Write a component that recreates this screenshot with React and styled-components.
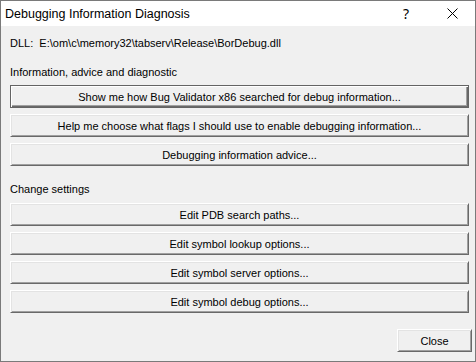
import React from 'react';
import styled, { createGlobalStyle } from 'styled-components';

const Global = createGlobalStyle`
    html, body {
        margin: 0;
        padding: 0;
        background: #f0f0f0;
    }
`;

const Window = styled.div`
    width: 476px;
    height: 362px;
    box-sizing: border-box;
    border: 1px solid #7a7a7a;
    background: #f0f0f0;
    display: flex;
    flex-direction: column;
    font-family: "Liberation Sans", Arial, sans-serif;
    font-size: 11px;
    color: #000;
`;

const TitleBar = styled.div`
    height: 25px;
    background: #fff;
    display: flex;
    align-items: center;
    padding-left: 4px;
`;

const Title = styled.span`
    flex: 1;
    font-family: "Liberation Sans", Arial, sans-serif;
    font-size: 12.5px;
    padding-top: 1px;
`;

const TitleButton = styled.span`
    width: ${p => p.$w}px;
    height: 25px;
    display: flex;
    align-items: center;
    justify-content: center;
    font-family: "Noto Sans", sans-serif;
    font-size: 14px;
`;

const Body = styled.div`
    flex: 1;
    display: flex;
    flex-direction: column;
    padding: 11px 6px 0 9px;
`;

const Label = styled.div`
    height: 13px;
    line-height: 13px;
    margin-bottom: ${p => p.$after || 6}px;
    margin-top: ${p => p.$before || 0}px;
    white-space: pre;
`;

const Stack = styled.div`
    display: flex;
    flex-direction: column;
    gap: 6px;
`;

const Button = styled.button`
    height: 23px;
    box-sizing: border-box;
    margin: 0;
    padding: 0;
    background: #f0f0f0;
    font-family: "Liberation Sans", Arial, sans-serif;
    font-size: 11px;
    color: #000;
    text-align: center;
    border: 1px solid;
    border-color: ${p => p.$default ? '#646464' : '#fff #696969 #696969 #fff'};
    box-shadow: ${p => p.$default
        ? 'inset 1px 1px #fff, inset -1px -1px #696969, inset -2px -2px #a0a0a0'
        : 'inset 1px 1px #e3e3e3, inset -1px -1px #a0a0a0'};
`;

const Footer = styled.div`
    display: flex;
    justify-content: flex-end;
    margin-top: 16px;
    margin-right: -3px;
`;

const CloseButton = styled(Button)`
    width: 75px;
`;

function XIcon() {
    return (
        <svg width="11" height="11" viewBox="0 0 11 11">
            <path d="M0.5 0.5 L10.5 10.5 M10.5 0.5 L0.5 10.5" stroke="#000" strokeWidth="1" />
        </svg>
    );
}

export default function App() {
    return (
        <>
            <Global />
            <Window>
                <TitleBar>
                    <Title>Debugging Information Diagnosis</Title>
                    <TitleButton $w={26}>?</TitleButton>
                    <TitleButton $w={19} />
                    <TitleButton $w={28}><XIcon /></TitleButton>
                    <TitleButton $w={9} />
                </TitleBar>
                <Body>
                    <Label $after={16}>DLL:  E:\om\c\memory32\tabserv\Release\BorDebug.dll</Label>
                    <Label>Information, advice and diagnostic</Label>
                    <Stack>
                        <Button $default>Show me how Bug Validator x86 searched for debug information...</Button>
                        <Button>Help me choose what flags I should use to enable debugging information...</Button>
                        <Button>Debugging information advice...</Button>
                    </Stack>
                    <Label $before={17} $after={7}>Change settings</Label>
                    <Stack>
                        <Button>Edit PDB search paths...</Button>
                        <Button>Edit symbol lookup options...</Button>
                        <Button>Edit symbol server options...</Button>
                        <Button>Edit symbol debug options...</Button>
                    </Stack>
                    <Footer>
                        <CloseButton>Close</CloseButton>
                    </Footer>
                </Body>
            </Window>
        </>
    );
}
